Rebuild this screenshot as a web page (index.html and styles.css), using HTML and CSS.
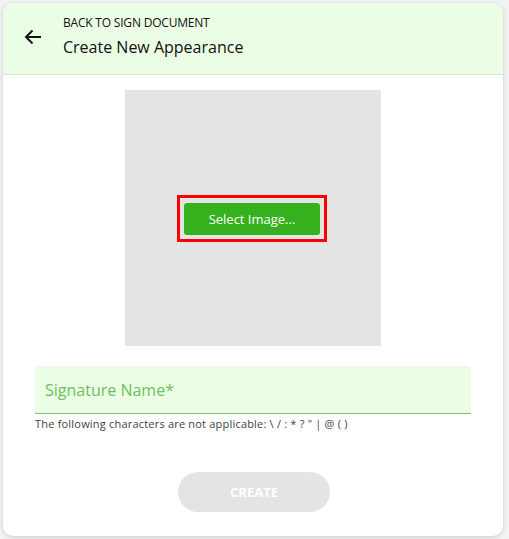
FILE: index.html
```html
<!DOCTYPE html>
<html>
<head>
<meta charset="utf-8">
<link rel="stylesheet" href="styles.css">
</head>
<body>
<div class="backdrop">
  <div class="dialog">
    <div class="header">
      <button class="back" aria-label="Back">
        <svg width="18" height="16" viewBox="0 0 18 16"><path d="M17 8H2M8.5 1.5L2 8l6.5 6.5" fill="none" stroke="#111" stroke-width="2"/></svg>
      </button>
      <div class="titles">
        <div class="crumb">BACK TO SIGN DOCUMENT</div>
        <div class="title">Create New Appearance</div>
      </div>
    </div>
    <div class="body">
      <div class="image-box">
        <div class="focus-ring">
          <button class="select-btn">Select Image...</button>
        </div>
      </div>
      <div class="field">
        <div class="input">Signature Name*</div>
        <div class="hint">The following characters are not applicable: \ / : * ? " | @ ( )</div>
      </div>
      <button class="create-btn">CREATE</button>
    </div>
  </div>
</div>
</body>
</html>
```
FILE: styles.css
```css
html, body {
  margin: 0;
  height: 100%;
}
body {
  background: #f3f3f3;
  font-family: "Open Sans", "Noto Sans", sans-serif;
}
.backdrop {
  padding: 3px 6px 3px 3px;
  height: 539px;
  box-sizing: border-box;
}
.dialog {
  width: 500px;
  height: 533px;
  background: #fff;
  border-radius: 10px;
  box-shadow: 0 1px 4px rgba(0,0,0,0.18);
  overflow: hidden;
  display: flex;
  flex-direction: column;
}
.header {
  background: #ecfde5;
  border-bottom: 1px solid #d3e8cc;
  display: flex;
  align-items: flex-start;
  box-sizing: border-box;
  height: 72px;
}
.back {
  background: none;
  border: none;
  padding: 0;
  margin: 25px 0 0 20px;
  width: 20px;
  height: 18px;
  display: flex;
  align-items: center;
  justify-content: center;
}
.titles {
  margin: 12px 0 0 20px;
}
.crumb {
  font-size: 12px;
  color: #111;
  letter-spacing: -0.2px;
  line-height: 16px;
}
.title {
  font-size: 16px;
  color: #111;
  margin-top: 6px;
  line-height: 20px;
}
.body {
  display: flex;
  flex-direction: column;
  align-items: center;
  padding-top: 15px;
}
.image-box {
  width: 256px;
  height: 256px;
  background: #e4e4e4;
  display: flex;
  align-items: center;
  justify-content: center;
}
.focus-ring {
  border: 3px solid #f00;
  padding: 5px 4px 4px 4px;
  margin: 1px 2px 0 0;
  display: flex;
}
.select-btn {
  width: 136px;
  height: 32px;
  background: #35b11d;
  color: #fff;
  border: none;
  border-radius: 3px;
  font-family: inherit;
  font-size: 13px;
  padding: 0;
}
.field {
  align-self: stretch;
  margin: 20px 32px 0 32px;
}
.input {
  height: 47px;
  background: #ecfde5;
  border-bottom: 1px solid #7cc96c;
  border-radius: 4px 4px 0 0;
  color: #6bc25a;
  font-size: 16px;
  padding: 0 10px;
  display: flex;
  align-items: center;
}
.hint {
  font-size: 11px;
  color: #444;
  margin-top: 2px;
  letter-spacing: 0.2px;
}
.create-btn {
  margin-top: 41px;
  width: 152px;
  height: 40px;
  border-radius: 20px;
  border: none;
  background: #e4e4e4;
  color: #fff;
  font-family: inherit;
  font-weight: 700;
  font-size: 13px;
  margin-left: 2px;
}
```
